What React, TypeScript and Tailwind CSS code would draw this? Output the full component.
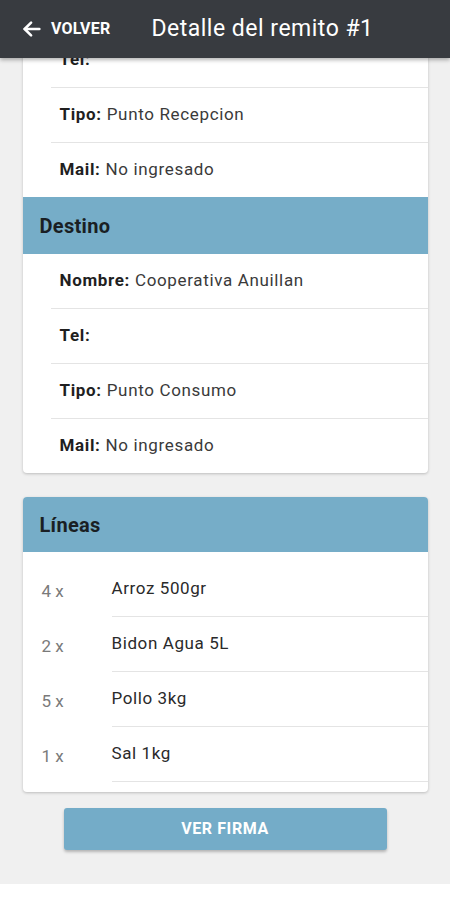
import React from "react";

const font = { fontFamily: "Roboto, 'Noto Sans', sans-serif" };

function InfoRow({ label, value, last }: { label: string; value?: string; last?: boolean }) {
  return (
    <div className={`ml-[28px] pl-[9px] flex items-center text-[17px] tracking-[0.65px] ${last ? "h-[54px]" : "h-[55px] border-b border-[#e4e4e4]"}`}>
      <span className="font-bold text-[#1f1f1f]">{label}</span>
      {value ? <span className="ml-[5px] text-[#3a3a3a]">{value}</span> : null}
    </div>
  );
}

function LineRow({ qty, name }: { qty: string; name: string }) {
  return (
    <div className="flex h-[55px]">
      <div className="w-[89px] pl-[19px] flex items-center pt-[5px] text-[17px] text-[#7a7a7a]">{qty}</div>
      <div className="flex-1 flex items-center border-b border-[#e4e4e4] text-[17px] tracking-[0.6px] text-[#2a2a2a]">{name}</div>
    </div>
  );
}

export default function App() {
  return (
    <div className="w-[450px] h-[900px] bg-white flex flex-col overflow-hidden" style={font}>
      <header className="h-[58px] shrink-0 bg-[#383b40] flex items-center relative z-10 shadow-[0_2px_4px_rgba(0,0,0,0.3)]">
        <div className="flex items-center pl-[21px]">
          <svg width="22" height="22" viewBox="0 0 24 24" fill="none" stroke="white" strokeWidth="2.8" strokeLinecap="round" strokeLinejoin="round">
            <path d="M20 12H4" />
            <path d="M11 5l-7 7 7 7" />
          </svg>
          <span className="ml-[8px] text-white font-bold text-[16px] tracking-[0.2px]">VOLVER</span>
        </div>
        <h1 className="ml-[41px] text-white text-[23px] font-normal tracking-[0.5px]">Detalle del remito #1</h1>
      </header>
      <main className="h-[826px] shrink-0 bg-[#f0f0f0] overflow-hidden flex flex-col items-center">
        <div className="w-[405px] mt-[-25px] bg-white rounded-[4px] shadow-[0_1px_3px_rgba(0,0,0,0.22)] overflow-hidden">
          <InfoRow label="Tel:" />
          <InfoRow label="Tipo:" value="Punto Recepcion" />
          <InfoRow label="Mail:" value="No ingresado" last />
          <div className="h-[57px] bg-[#76adc8] flex items-center pl-[17px] text-[20px] tracking-[0.3px] font-bold text-[#1a1f24]">Destino</div>
          <InfoRow label="Nombre:" value="Cooperativa Anuillan" />
          <InfoRow label="Tel:" />
          <InfoRow label="Tipo:" value="Punto Consumo" />
          <InfoRow label="Mail:" value="No ingresado" last />
        </div>
        <div className="w-[405px] mt-[24px] bg-white rounded-[4px] shadow-[0_1px_3px_rgba(0,0,0,0.22)] overflow-hidden pb-[10px]">
          <div className="h-[55px] bg-[#76adc8] flex items-center pl-[17px] text-[20px] tracking-[0.3px] font-bold text-[#1a1f24]">Líneas</div>
          <div className="pt-[10px]">
            <LineRow qty="4 x" name="Arroz 500gr" />
            <LineRow qty="2 x" name="Bidon Agua 5L" />
            <LineRow qty="5 x" name="Pollo 3kg" />
            <LineRow qty="1 x" name="Sal 1kg" />
          </div>
        </div>
        <button className="mt-[16px] w-[323px] h-[42px] bg-[#74acc8] rounded-[3px] shadow-[0_2px_3px_rgba(0,0,0,0.25)] text-white text-[16px] font-bold tracking-[0.6px]">
          VER FIRMA
        </button>
      </main>
    </div>
  );
}
